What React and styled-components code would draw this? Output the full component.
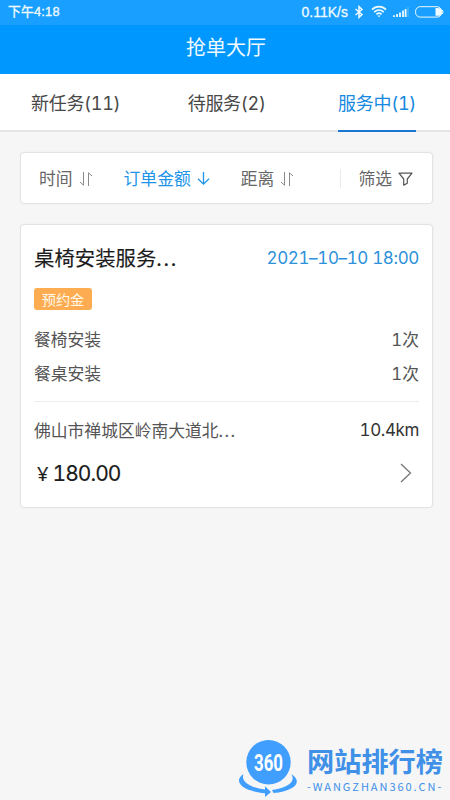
import React from "react";
import styled, { createGlobalStyle } from "styled-components";

const GlobalStyle = createGlobalStyle`
  * {
    box-sizing: border-box;
  }

  body {
    margin: 0;
    background-color: #f6f6f6;
    font-family: Inter, "Noto Sans CJK SC", sans-serif;
    font-variant-numeric: tabular-nums;
    color: #545454;
  }
`;

const Screen = styled.div`
  width: 450px;
  height: 800px;
  display: flex;
  flex-direction: column;
  background-color: #f6f6f6;
  overflow: hidden;
  white-space: nowrap;
`;

const StatusBar = styled.div`
  height: 25px;
  padding: 0 6px 2px 8px;
  display: flex;
  justify-content: space-between;
  align-items: center;
  background-color: #189fff;
  color: #effaff;
  font-family: "Liberation Sans", "Noto Sans CJK SC", sans-serif;
  line-height: 23px;
`;

const Clock = styled.span`
  font-size: 12.8px;
  letter-spacing: 0.2px;
  -webkit-text-stroke: 0.35px currentColor;
`;

const StatusIcons = styled.div`
  display: flex;
  align-items: center;
`;

const Speed = styled.span`
  padding-top: 1px;
  font-size: 14px;
  margin-right: 6px;
  -webkit-text-stroke: 0.3px currentColor;
`;

const Header = styled.header`
  height: 49px;
  padding: 0 0 4px 2px;
  display: flex;
  justify-content: center;
  align-items: center;
  background-color: #0098ff;
  color: #f2faff;
  font-size: 20px;
  line-height: 30px;
`;

const Tabs = styled.nav`
  height: 58px;
  padding: 0 34px 0 31px;
  display: flex;
  justify-content: space-between;
  background-color: #fff;
  border-bottom: 2px solid #e5e5e5;
`;

const Tab = styled.div`
  height: 58px;
  margin-right: ${(props) => props.$after || "0"};
  padding-top: 15px;
  font-size: 18px;
  line-height: 30px;
  letter-spacing: -0.3px;
  color: ${(props) => (props.$active ? "#1689e0" : "#484848")};
  border-bottom: 2px solid
    ${(props) => (props.$active ? "#1976d2" : "transparent")};
`;

const Content = styled.main`
  flex: 1;
  padding: 20px 17px 0 20px;
`;

const Card = styled.section`
  background-color: #fff;
  border: 1px solid #e3e3e3;
  border-radius: 4px;
  box-shadow: 0 0 2px rgba(0, 0, 0, 0.06);
`;

const Filters = styled(Card)`
  height: 52px;
  padding: 1px 19px 0 18px;
  display: flex;
  align-items: center;
`;

const Filter = styled.div`
  display: flex;
  align-items: center;
  gap: 6px;
  margin-right: ${(props) => props.$after || "0"};
  font-size: 16.8px;
  line-height: 26px;
  color: ${(props) => (props.$active ? "#2094e8" : "#666")};
`;

const Separator = styled.div`
  width: 1px;
  height: 19px;
  margin: 0 17px 0 auto;
  background-color: #eaeaea;
`;

const Order = styled(Card)`
  height: 284px;
  margin-top: 20px;
  padding: 17px 13px 0;
`;

const Row = styled.div`
  height: ${(props) => props.$height};
  display: flex;
  justify-content: space-between;
  align-items: center;
  font-size: 16.8px;
`;

const Title = styled.h2`
  margin: 0;
  font-size: 20.4px;
  font-weight: 400;
  color: #1c1c1c;
  -webkit-text-stroke: 0.15px currentColor;
`;

const Dots = styled.span`
  letter-spacing: ${(props) => props.$spacing};
`;

const Time = styled.span`
  padding-top: 1px;
  font-size: 17px;
  letter-spacing: -0.37px;
  color: #2c91da;
`;

const Tag = styled.div`
  width: 58px;
  height: 22px;
  margin: 16px 0 12px;
  border-radius: 3px;
  display: flex;
  justify-content: center;
  align-items: center;
  background-color: #fdac51;
  color: #fff8e8;
  font-size: 14.2px;
`;

const Distance = styled.span`
  font-size: 17px;
  letter-spacing: -0.4px;
  color: #333;
`;

const Divider = styled.div`
  height: 1px;
  margin: 11px 0 10px;
  background-color: #ededed;
`;

const Price = styled.div`
  display: flex;
  align-items: center;
  padding-left: 3px;
  gap: 5px;
  font-size: 21px;
  letter-spacing: -0.95px;
  color: #1c1c1c;
  -webkit-text-stroke: 0.15px currentColor;
`;

const Yen = styled.span`
  font-family: "Noto Sans", sans-serif;
  font-size: 20px;
`;

const Brand = styled.footer`
  height: 63px;
  padding-left: 238px;
  display: flex;
  align-items: flex-start;
  gap: 8px;
`;

const BrandText = styled.div`
  padding-top: 10px;
  color: #4090e8;
`;

const BrandName = styled.div`
  font-size: 27.2px;
  font-weight: 700;
  line-height: 32px;
`;

const BrandUrl = styled.div`
  font-family: "Noto Sans CJK SC", sans-serif;
  font-size: 11px;
  line-height: 14px;
  letter-spacing: 1.95px;
`;

const Bluetooth = () => (
  <svg width="10" height="14" viewBox="0 0 10 14" fill="none" stroke="currentColor" strokeWidth="1.5">
    <path d="M1.5 4 8 9.5 5 12.4V1.6L8 4.5 1.5 10" />
  </svg>
);

const Wifi = () => (
  <svg width="16" height="13" viewBox="0 0 16 13" fill="none" stroke="currentColor" strokeWidth="1.6">
    <path d="M1 4.6C5 .6 11 .6 15 4.6M3.2 7.1c2.8-2.7 6.8-2.7 9.6 0M5.4 9.3c1.6-1.5 3.6-1.5 5.2 0" />
    <path d="M6.4 10.4h3.2L8 12.3z" fill="currentColor" stroke="none" />
  </svg>
);

const Signal = () => (
  <svg width="16" height="12" viewBox="0 0 16 12" fill="none" stroke="currentColor" strokeWidth="1.8">
    <path d="M1 9.2V11M4 8v3M7 6.5V11M10 4.5V11M12.6 3v8" />
    <path d="M15 1v10" strokeOpacity=".35" strokeWidth="1" />
  </svg>
);

const Battery = () => (
  <svg width="29" height="12" viewBox="0 0 29 12">
    <rect x=".6" y=".7" width="26" height="10.4" rx="4.5" fill="none" stroke="currentColor" />
    <path d="M20.5 2H23a3.9 3.9 0 0 1 0 7.8h-2.5z" fill="currentColor" />
    <path d="M27.3 4q1.6 2 0 4" fill="none" stroke="currentColor" />
  </svg>
);

const Sort = () => (
  <svg width="14" height="16" viewBox="0 0 14 16" fill="none" stroke="#8a8a8a">
    <path d="M4.5 1v13.2L1 11M9.5 15V1.8L13 5" />
  </svg>
);

const ArrowDown = () => (
  <svg width="13" height="15" viewBox="0 0 13 15" fill="none" stroke="currentColor" strokeWidth="1.3">
    <path d="M6.5 1v12M1 7.8l5.5 5.3L12 7.8" />
  </svg>
);

const Funnel = () => (
  <svg width="15" height="14" viewBox="0 0 15 14" fill="none" stroke="#555" strokeWidth="1.2">
    <path d="M1 1.2h13L9.3 7v4.2l-3.6 1.9V7z" strokeLinejoin="round" />
  </svg>
);

const Chevron = () => (
  <svg width="20" height="20" viewBox="0 0 20 20" fill="none" stroke="#777" strokeWidth="1.3">
    <path d="m2 1 9.5 9L2 19" />
  </svg>
);

const BrandLogo = () => (
  <svg width="61" height="62" viewBox="0 0 61 62" fill="#409eff">
    <circle cx="30.5" cy="25.2" r="22.2" />
    <path d="M5.5 37C2.5 44 11 50.5 27 52.5V49.3l6 5.7-6 5v-3.7C3 54-5 44 5.5 37z" />
    <path d="M53 37C58.5 44 50 51 34 53l1.5 3C56 54 66 45 53 37z" />
    <text x="30.5" y="34" textAnchor="middle" textLength="29" lengthAdjust="spacingAndGlyphs" fill="#fff" fontFamily="Roboto" fontSize="24.5" fontWeight="700">360</text>
  </svg>
);

const services = [
  { name: "餐椅安装", count: "1次" },
  { name: "餐桌安装", count: "1次" },
];

const App = () => {
  return (
    <Screen>
      <GlobalStyle />
      <StatusBar>
        <Clock>下午4:18</Clock>
        <StatusIcons>
          <Speed>0.11K/s</Speed>
          <Bluetooth />
          <span style={{ width: 7 }} />
          <Wifi />
          <span style={{ width: 6 }} />
          <Signal />
          <span style={{ width: 6 }} />
          <Battery />
        </StatusIcons>
      </StatusBar>
      <Header>抢单大厅</Header>
      <Tabs>
        <Tab>新任务(11)</Tab>
        <Tab $after="5px">待服务(2)</Tab>
        <Tab $active>服务中(1)</Tab>
      </Tabs>
      <Content>
        <Filters>
          <Filter $after="31px">
            时间 <Sort />
          </Filter>
          <Filter $active $after="31px">
            订单金额 <ArrowDown />
          </Filter>
          <Filter>
            距离 <Sort />
          </Filter>
          <Separator />
          <Filter>
            筛选 <Funnel />
          </Filter>
        </Filters>
        <Order>
          <Row $height="30px">
            <Title>
              桌椅安装服务<Dots $spacing="1.7px">...</Dots>
            </Title>
            <Time>2021–10–10 18:00</Time>
          </Row>
          <Tag>预约金</Tag>
          {services.map((service) => (
            <Row $height="34px" key={service.name}>
              <span>{service.name}</span>
              <span>{service.count}</span>
            </Row>
          ))}
          <Divider />
          <Row $height="36px">
            <span>
              佛山市禅城区岭南大道北<Dots $spacing="1.5px">...</Dots>
            </span>
            <Distance>10.4km</Distance>
          </Row>
          <Row $height="50px">
            <Price>
              <Yen>¥</Yen>180.00
            </Price>
            <Chevron />
          </Row>
        </Order>
      </Content>
      <Brand>
        <BrandLogo />
        <BrandText>
          <BrandName>网站排行榜</BrandName>
          <BrandUrl>-WANGZHAN360.CN-</BrandUrl>
        </BrandText>
      </Brand>
    </Screen>
  );
};

export default App;
